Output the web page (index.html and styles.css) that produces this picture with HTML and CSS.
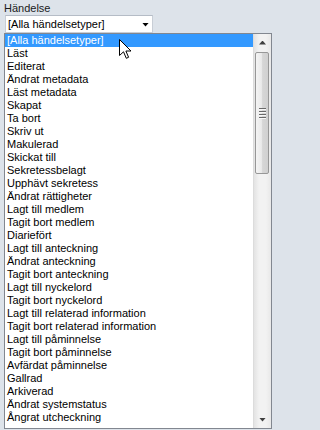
FILE: index.html
```html
<!DOCTYPE html>
<html>
<head>
<meta charset="utf-8">
<link rel="stylesheet" href="styles.css">
</head>
<body>
<div class="panel">
  <div class="label">Händelse</div>
  <div class="select">
    <span class="select-text">[Alla händelsetyper]</span>
    <span class="select-arrow"></span>
  </div>
  <div class="list">
    <ul class="items">
      <li class="item selected">[Alla händelsetyper]</li>
      <li class="item">Läst</li>
      <li class="item">Editerat</li>
      <li class="item">Ändrat metadata</li>
      <li class="item">Läst metadata</li>
      <li class="item">Skapat</li>
      <li class="item">Ta bort</li>
      <li class="item">Skriv ut</li>
      <li class="item">Makulerad</li>
      <li class="item">Skickat till</li>
      <li class="item">Sekretessbelagt</li>
      <li class="item">Upphävt sekretess</li>
      <li class="item">Ändrat rättigheter</li>
      <li class="item">Lagt till medlem</li>
      <li class="item">Tagit bort medlem</li>
      <li class="item">Diariefört</li>
      <li class="item">Lagt till anteckning</li>
      <li class="item">Ändrat anteckning</li>
      <li class="item">Tagit bort anteckning</li>
      <li class="item">Lagt till nyckelord</li>
      <li class="item">Tagit bort nyckelord</li>
      <li class="item">Lagt till relaterad information</li>
      <li class="item">Tagit bort relaterad information</li>
      <li class="item">Lagt till påminnelse</li>
      <li class="item">Tagit bort påminnelse</li>
      <li class="item">Avfärdat påminnelse</li>
      <li class="item">Gallrad</li>
      <li class="item">Arkiverad</li>
      <li class="item">Ändrat systemstatus</li>
      <li class="item">Ångrat utcheckning</li>
    </ul>
    <div class="scrollbar">
      <div class="sb-btn"><span class="arrow-up"></span></div>
      <div class="sb-track">
        <div class="sb-thumb"><span class="grip"></span><span class="grip"></span><span class="grip"></span><span class="grip"></span></div>
      </div>
      <div class="sb-btn"><span class="arrow-down"></span></div>
    </div>
  </div>
  <svg class="cursor" width="14" height="21" viewBox="0 0 14 21">
    <path d="M0.5 0.5 L0.5 16.5 L4.5 12.8 L7.3 19.3 L9.6 18.3 L6.9 12 L12 12 Z" fill="#ffffff" stroke="#000000" stroke-width="1" stroke-linejoin="miter"/>
  </svg>
</div>
</body>
</html>
```
FILE: styles.css
```css
html, body {
  margin: 0;
  padding: 0;
}
body {
  background: #dde3ea;
  font-family: "Liberation Sans", Arial, sans-serif;
  font-size: 11px;
  color: #000000;
  width: 275px;
  height: 430px;
  overflow: hidden;
}
.panel {
  position: relative;
  padding-top: 2px;
}
.label {
  margin-left: 4px;
  line-height: 13px;
  height: 13px;
  color: #1a1a1a;
}
.select {
  margin-left: 5px;
  width: 146px;
  height: 16px;
  background: #ffffff;
  border: 1px solid #c8ced6;
  border-top-color: #b5bcc6;
  display: flex;
  align-items: center;
  justify-content: space-between;
}
.select-text {
  padding-left: 2px;
  line-height: 14px;
}
.select-arrow {
  width: 7px;
  height: 4px;
  background: #000;
  clip-path: polygon(0 0, 100% 0, 50% 100%);
  margin-right: 3px;
  margin-top: 1px;
}
.list {
  margin-left: 4px;
  width: 266px;
  height: 394px;
  border: 1px solid #828790;
  background: #ffffff;
  display: flex;
}
.items {
  list-style: none;
  margin: 0;
  padding: 0;
  flex: 1;
}
.item {
  height: 13px;
  line-height: 13px;
  padding-left: 2px;
  white-space: nowrap;
}
.item.selected {
  background: #3399ff;
  color: #ffffff;
}
.scrollbar {
  width: 18px;
  display: flex;
  flex-direction: column;
  background: linear-gradient(to right, #e3e3e3, #f2f2f2 30%, #f2f2f2 70%, #e8e8e8);
  border-left: 1px solid #dcdcdc;
  box-sizing: border-box;
}
.sb-btn {
  height: 17px;
  display: flex;
  align-items: center;
  justify-content: center;
}
.arrow-up {
  width: 7px;
  height: 4px;
  background: #404040;
  clip-path: polygon(50% 0, 100% 100%, 0 100%);
}
.arrow-down {
  width: 7px;
  height: 4px;
  background: #404040;
  clip-path: polygon(0 0, 100% 0, 50% 100%);
}
.sb-track {
  flex: 1;
  padding-top: 1px;
}
.sb-thumb {
  margin-left: 1px;
  width: 14px;
  height: 122px;
  box-sizing: border-box;
  border: 1px solid #979797;
  border-radius: 2px;
  background: linear-gradient(to right, #f4f4f4, #eaeaea 45%, #d6d6d6 55%, #d0d0d0);
  display: flex;
  flex-direction: column;
  align-items: center;
  justify-content: center;
  gap: 1px;
}
.grip {
  width: 7px;
  height: 1px;
  background: #6a6a6a;
  border-bottom: 1px solid #f8f8f8;
}
.cursor {
  position: absolute;
  left: 119px;
  top: 39px;
}
```
